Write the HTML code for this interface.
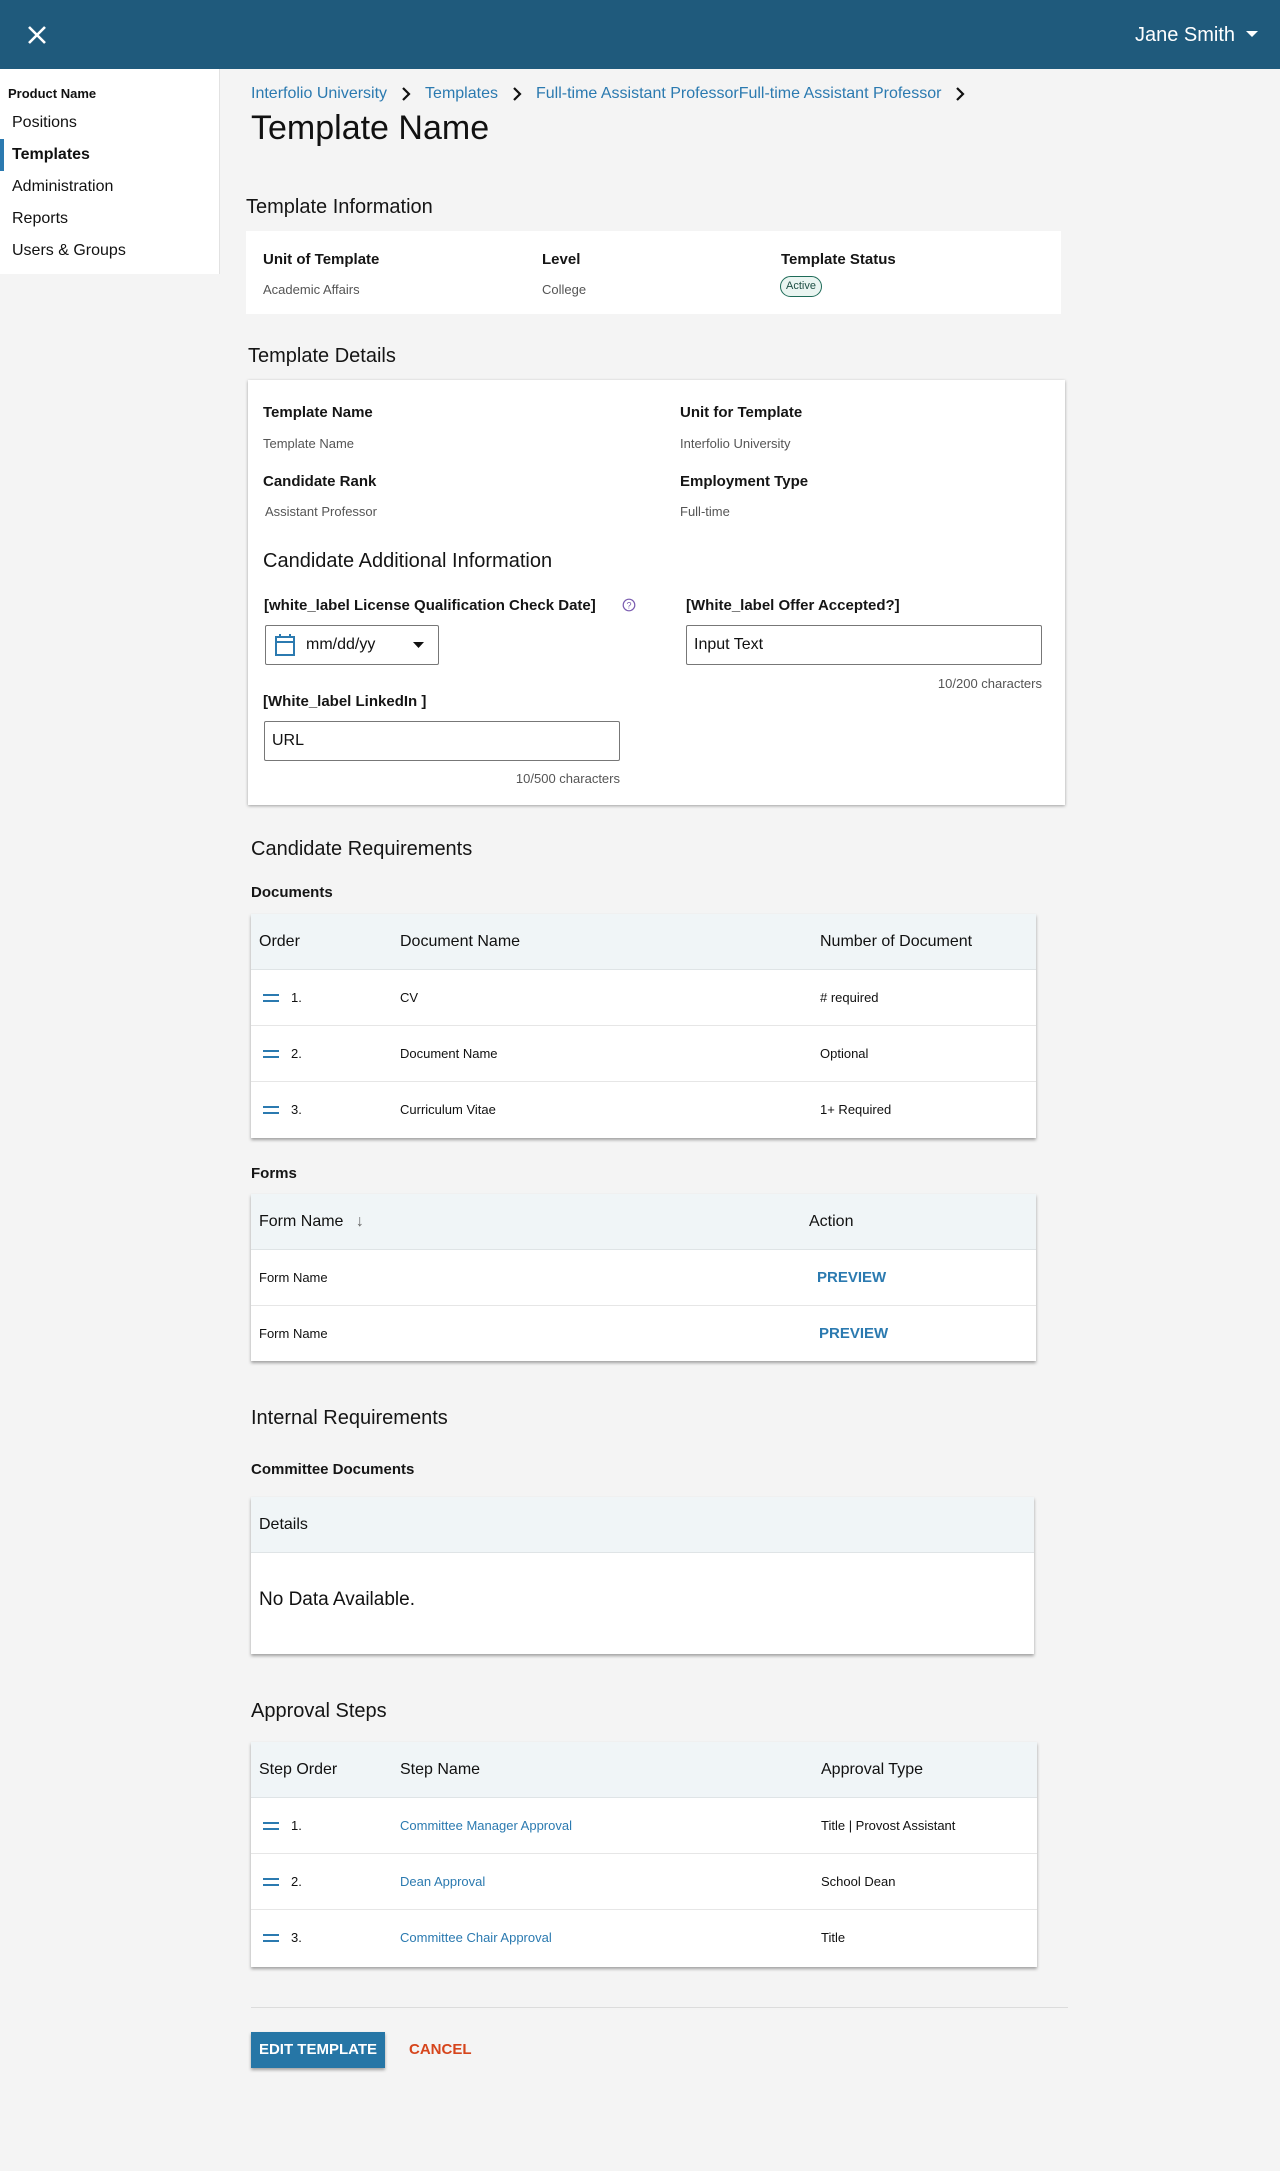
<!DOCTYPE html>
<html><head><meta charset="utf-8"><style>
*{box-sizing:border-box;margin:0;padding:0}
body{width:1280px;height:2171px;background:#f4f4f4;font-family:"Liberation Sans",Arial,sans-serif;color:#111;position:relative;overflow:hidden}
.a{position:absolute;white-space:nowrap}
.hdr{position:absolute;left:0;top:0;width:1280px;height:69px;background:#1f5a7c}
.side{position:absolute;left:0;top:69px;width:220px;height:205px;background:#fff;border-right:1px solid #e2e2e2}
.card{position:absolute;background:#fff}
.sh{box-shadow:0 1px 3px rgba(0,0,0,.35)}
.lbl{font-size:15px;font-weight:bold;color:#151515}
.val{font-size:13px;color:#555}
.h2{font-size:20px;color:#151515}
.link{color:#2b7ab0}
.tbl{position:absolute;background:#fff;box-shadow:0 2px 3px rgba(0,0,0,.35)}
.th{position:absolute;left:0;right:0;top:0;height:56px;background:#f0f5f7;border-bottom:1px solid #dfe4e6}
.row{position:absolute;left:0;right:0;height:56px;border-bottom:1px solid #e6e6e6}
.drag{position:absolute;width:16px;height:8px;border-top:2.5px solid #2b7ab0;border-bottom:2.5px solid #2b7ab0}
.inp{position:absolute;border:1px solid #777;border-radius:2px;background:#fff;font-size:16px}
.chev{display:inline-block;vertical-align:middle;margin:0 14px 0 14px}
</style></head><body>
<div class="hdr"></div>
<svg class="a" style="left:27px;top:25px" width="20" height="20" viewBox="0 0 20 20"><path d="M2 2L18 18M18 2L2 18" stroke="#fff" stroke-width="2.6"/></svg>
<div class="a" style="left:1135px;top:24px;font-size:20px;color:#fff">Jane Smith</div>
<svg class="a" style="left:1246px;top:31px" width="12" height="7"><path d="M0 0H12L6 6Z" fill="#fff"/></svg>

<div class="side"></div>
<div class="a" style="left:8px;top:86px;font-size:13px;font-weight:bold">Product Name</div>
<div class="a" style="left:12px;top:114px;font-size:16px">Positions</div>
<div class="a" style="left:0;top:139px;width:4px;height:32px;background:#2b7ab0"></div>
<div class="a" style="left:12px;top:146px;font-size:16px;font-weight:bold">Templates</div>
<div class="a" style="left:12px;top:178px;font-size:16px">Administration</div>
<div class="a" style="left:12px;top:210px;font-size:16px">Reports</div>
<div class="a" style="left:12px;top:242px;font-size:16px">Users &amp; Groups</div>

<div class="a link" style="left:251px;top:85px;font-size:16px">Interfolio University<svg class="chev" width="10" height="14" viewBox="0 0 10 14"><path d="M2 1L8 7L2 13" fill="none" stroke="#111" stroke-width="2.2"/></svg>Templates<svg class="chev" width="10" height="14" viewBox="0 0 10 14"><path d="M2 1L8 7L2 13" fill="none" stroke="#111" stroke-width="2.2"/></svg>Full-time Assistant ProfessorFull-time Assistant Professor<svg class="chev" width="10" height="14" viewBox="0 0 10 14"><path d="M2 1L8 7L2 13" fill="none" stroke="#111" stroke-width="2.2"/></svg></div>
<div class="a" style="left:251px;top:109px;font-size:34px">Template Name</div>

<div class="a h2" style="left:246px;top:196px">Template Information</div>
<div class="card" style="left:246px;top:231px;width:815px;height:83px"></div>
<div class="a lbl" style="left:263px;top:251px">Unit of Template</div>
<div class="a val" style="left:263px;top:282px">Academic Affairs</div>
<div class="a lbl" style="left:542px;top:251px">Level</div>
<div class="a val" style="left:542px;top:282px">College</div>
<div class="a lbl" style="left:781px;top:251px">Template Status</div>
<div class="a" style="left:780px;top:276px;width:42px;height:21px;border:1.5px solid #1e6b58;border-radius:11px;background:#eaf5f1;font-size:11px;color:#1e4f44;text-align:center;line-height:18px">Active</div>

<div class="a h2" style="left:248px;top:345px">Template Details</div>
<div class="card sh" style="left:248px;top:380px;width:817px;height:425px"></div>
<div class="a lbl" style="left:263px;top:404px">Template Name</div>
<div class="a val" style="left:263px;top:436px">Template Name</div>
<div class="a lbl" style="left:680px;top:404px">Unit for Template</div>
<div class="a val" style="left:680px;top:436px">Interfolio University</div>
<div class="a lbl" style="left:263px;top:473px">Candidate Rank</div>
<div class="a val" style="left:265px;top:504px">Assistant Professor</div>
<div class="a lbl" style="left:680px;top:473px">Employment Type</div>
<div class="a val" style="left:680px;top:504px">Full-time</div>
<div class="a h2" style="left:263px;top:550px">Candidate Additional Information</div>
<div class="a lbl" style="left:264px;top:597px">[white_label License Qualification Check Date]</div>
<svg class="a" style="left:622px;top:598px" width="14" height="14" viewBox="0 0 14 14"><circle cx="7" cy="7" r="5.8" fill="none" stroke="#7a5cb0" stroke-width="1.2"/><text x="7" y="10.5" font-size="9" text-anchor="middle" fill="#7a5cb0" font-family="Liberation Sans">?</text></svg>
<div class="a lbl" style="left:686px;top:597px">[White_label Offer Accepted?]</div>
<div class="inp" style="left:265px;top:625px;width:174px;height:40px"></div>
<svg class="a" style="left:274px;top:633px" width="22" height="24" viewBox="0 0 22 24"><rect x="2" y="4" width="18" height="18" fill="none" stroke="#2b7ab0" stroke-width="2"/><path d="M2 9H20M6 1V5M16 1V5" stroke="#2b7ab0" stroke-width="2"/></svg>
<div class="a" style="left:306px;top:636px;font-size:16px">mm/dd/yy</div>
<svg class="a" style="left:413px;top:642px" width="11" height="6"><path d="M0 0H11L5.5 6Z" fill="#111"/></svg>
<div class="inp" style="left:686px;top:625px;width:356px;height:40px"></div>
<div class="a" style="left:694px;top:636px;font-size:16px">Input Text</div>
<div class="a val" style="left:927px;top:676px;width:115px;text-align:right">10/200 characters</div>
<div class="a lbl" style="left:263px;top:693px">[White_label LinkedIn ]</div>
<div class="inp" style="left:264px;top:721px;width:356px;height:40px"></div>
<div class="a" style="left:272px;top:732px;font-size:16px">URL</div>
<div class="a val" style="left:505px;top:771px;width:115px;text-align:right">10/500 characters</div>

<div class="a h2" style="left:251px;top:838px">Candidate Requirements</div>
<div class="a lbl" style="left:251px;top:884px">Documents</div>
<div class="tbl" style="left:251px;top:914px;width:785px;height:224px">
 <div class="th"><div class="a" style="left:8px;top:19px;font-size:16px">Order</div><div class="a" style="left:149px;top:19px;font-size:16px">Document Name</div><div class="a" style="left:569px;top:19px;font-size:16px">Number of Document</div></div>
 <div class="row" style="top:56px"><div class="drag" style="left:12px;top:24px"></div><div class="a" style="left:40px;top:20px;font-size:13px">1.</div><div class="a" style="left:149px;top:20px;font-size:13px">CV</div><div class="a" style="left:569px;top:20px;font-size:13px"># required</div></div>
 <div class="row" style="top:112px"><div class="drag" style="left:12px;top:24px"></div><div class="a" style="left:40px;top:20px;font-size:13px">2.</div><div class="a" style="left:149px;top:20px;font-size:13px">Document Name</div><div class="a" style="left:569px;top:20px;font-size:13px">Optional</div></div>
 <div class="row" style="top:168px;border:0"><div class="drag" style="left:12px;top:24px"></div><div class="a" style="left:40px;top:20px;font-size:13px">3.</div><div class="a" style="left:149px;top:20px;font-size:13px">Curriculum Vitae</div><div class="a" style="left:569px;top:20px;font-size:13px">1+ Required</div></div>
</div>

<div class="a lbl" style="left:251px;top:1165px">Forms</div>
<div class="tbl" style="left:251px;top:1194px;width:785px;height:167px">
 <div class="th"><div class="a" style="left:8px;top:19px;font-size:16px">Form Name <span style="color:#666;margin-left:8px">↓</span></div><div class="a" style="left:558px;top:19px;font-size:16px">Action</div></div>
 <div class="row" style="top:56px"><div class="a" style="left:8px;top:20px;font-size:13px">Form Name</div><div class="a link" style="left:566px;top:19px;font-size:15px;font-weight:bold">PREVIEW</div></div>
 <div class="row" style="top:112px;border:0"><div class="a" style="left:8px;top:20px;font-size:13px">Form Name</div><div class="a link" style="left:568px;top:19px;font-size:15px;font-weight:bold">PREVIEW</div></div>
</div>

<div class="a h2" style="left:251px;top:1407px">Internal Requirements</div>
<div class="a lbl" style="left:251px;top:1461px">Committee Documents</div>
<div class="tbl" style="left:251px;top:1497px;width:783px;height:157px">
 <div class="th"><div class="a" style="left:8px;top:19px;font-size:16px">Details</div></div>
 <div class="a" style="left:8px;top:92px;font-size:19px">No Data Available.</div>
</div>

<div class="a h2" style="left:251px;top:1700px">Approval Steps</div>
<div class="tbl" style="left:251px;top:1742px;width:786px;height:225px">
 <div class="th"><div class="a" style="left:8px;top:19px;font-size:16px">Step Order</div><div class="a" style="left:149px;top:19px;font-size:16px">Step Name</div><div class="a" style="left:570px;top:19px;font-size:16px">Approval Type</div></div>
 <div class="row" style="top:56px"><div class="drag" style="left:12px;top:24px"></div><div class="a" style="left:40px;top:20px;font-size:13px">1.</div><div class="a link" style="left:149px;top:20px;font-size:13px">Committee Manager Approval</div><div class="a" style="left:570px;top:20px;font-size:13px">Title | Provost Assistant</div></div>
 <div class="row" style="top:112px"><div class="drag" style="left:12px;top:24px"></div><div class="a" style="left:40px;top:20px;font-size:13px">2.</div><div class="a link" style="left:149px;top:20px;font-size:13px">Dean Approval</div><div class="a" style="left:570px;top:20px;font-size:13px">School Dean</div></div>
 <div class="row" style="top:168px;border:0"><div class="drag" style="left:12px;top:24px"></div><div class="a" style="left:40px;top:20px;font-size:13px">3.</div><div class="a link" style="left:149px;top:20px;font-size:13px">Committee Chair Approval</div><div class="a" style="left:570px;top:20px;font-size:13px">Title</div></div>
</div>

<div class="a" style="left:251px;top:2007px;width:817px;height:1px;background:#dcdcdc"></div>
<div class="a" style="left:251px;top:2032px;width:134px;height:36px;background:#2676a6;box-shadow:0 2px 3px rgba(0,0,0,.35);color:#fff;font-size:15px;font-weight:bold;text-align:center;line-height:36px">EDIT TEMPLATE</div>
<div class="a" style="left:409px;top:2041px;font-size:15px;font-weight:bold;color:#d6451c">CANCEL</div>
</body></html>
